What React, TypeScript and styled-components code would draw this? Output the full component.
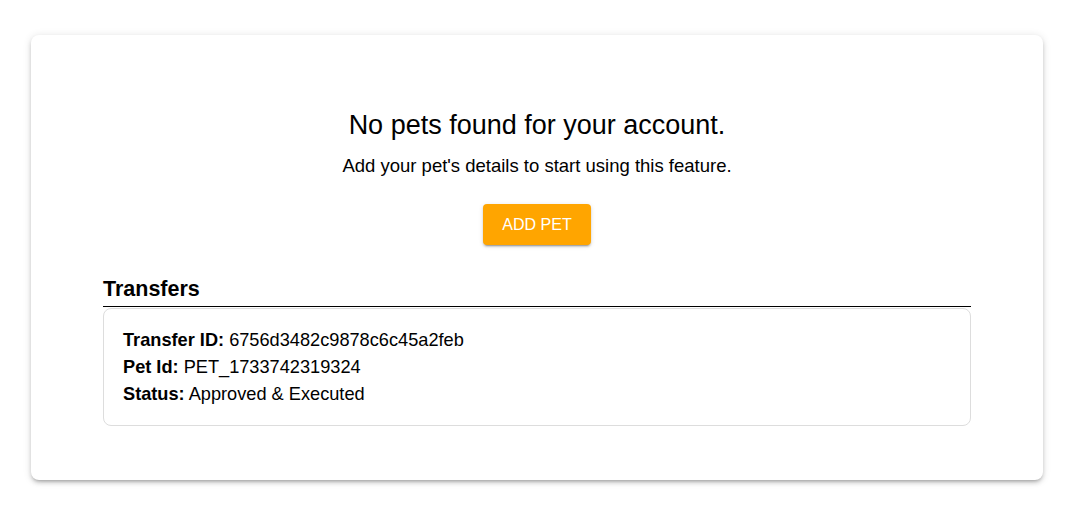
import React from 'react'
import styled, { createGlobalStyle } from 'styled-components'

const GlobalStyle = createGlobalStyle`
  body {
    margin: 0;
    background: #ffffff;
    font-family: "Liberation Sans", Arial, sans-serif;
    color: #000000;
  }
`

const Page = styled.div`
  padding: 35px 26px 40px 31px;
`

const Card = styled.section`
  background: #ffffff;
  border-radius: 8px;
  padding: 74px 72px 54px;
  box-shadow: 0px 3px 3px -2px rgba(0, 0, 0, 0.2), 0px 3px 4px 0px rgba(0, 0, 0, 0.14),
    0px 1px 8px 0px rgba(0, 0, 0, 0.12);
`

const Empty = styled.div`
  display: flex;
  flex-direction: column;
  align-items: center;
  text-align: center;
`

const Title = styled.h2`
  margin: 0;
  font-size: 27px;
  line-height: 32px;
  font-weight: 400;
`

const Subtitle = styled.p`
  margin: 12px 0 0;
  font-size: 18.5px;
  line-height: 26px;
`

const AddButton = styled.button`
  margin-top: 25px;
  height: 41px;
  padding: 0 19px;
  border: none;
  border-radius: 4px;
  background: #ffa500;
  color: #ffffff;
  font-family: inherit;
  font-size: 16px;
  line-height: 41px;
  text-transform: uppercase;
  cursor: pointer;
  box-shadow: 0px 3px 1px -2px rgba(0, 0, 0, 0.2), 0px 2px 2px 0px rgba(0, 0, 0, 0.14),
    0px 1px 5px 0px rgba(0, 0, 0, 0.12);
`

const SectionTitle = styled.h3`
  margin: 31px 0 0;
  padding-bottom: 4px;
  border-bottom: 1px solid #000000;
  font-size: 21.5px;
  line-height: 26px;
  font-weight: 700;
`

const TransferBox = styled.div`
  margin-top: 1px;
  border: 1px solid #dddddd;
  border-radius: 8px;
  padding: 17.5px 19px;
`

const Row = styled.div`
  font-size: 18.2px;
  line-height: 27px;
`

const Label = styled.strong`
  font-weight: 700;
`

const transfers = [
  { id: '6756d3482c9878c6c45a2feb', petId: 'PET_1733742319324', status: 'Approved & Executed' },
]

export default function App() {
  return (
    <>
      <GlobalStyle />
      <Page>
        <Card>
          <Empty>
            <Title>No pets found for your account.</Title>
            <Subtitle>Add your pet's details to start using this feature.</Subtitle>
            <AddButton>Add Pet</AddButton>
          </Empty>
          <SectionTitle>Transfers</SectionTitle>
          {transfers.map((t) => (
            <TransferBox key={t.id}>
              <Row>
                <Label>Transfer ID:</Label> {t.id}
              </Row>
              <Row>
                <Label>Pet Id:</Label> {t.petId}
              </Row>
              <Row>
                <Label>Status:</Label> {t.status}
              </Row>
            </TransferBox>
          ))}
        </Card>
      </Page>
    </>
  )
}
